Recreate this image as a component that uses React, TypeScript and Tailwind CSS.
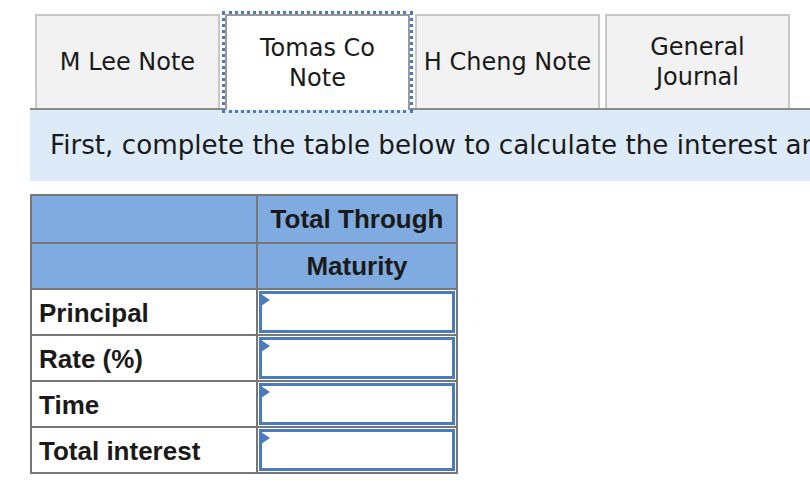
import React from "react";

const tabs = [
  { label: "M Lee Note", active: false },
  { label: "Tomas Co Note", active: true, lines: ["Tomas Co", "Note"] },
  { label: "H Cheng Note", active: false },
  { label: "General Journal", active: false, lines: ["General", "Journal"] },
];

const rows = ["Principal", "Rate (%)", "Time", "Total interest"];

function InputCell() {
  return (
    <td className="border-2 border-[#777] p-0 h-[46px]">
      <div className="relative h-[42px] mx-[1px] border-[3px] border-[#4a7bbd] bg-white">
        <span className="absolute -left-[1px] top-0 w-0 h-0 border-y-[6px] border-y-transparent border-l-[9px] border-l-[#4a7bbd]" />
      </div>
    </td>
  );
}

export default function App() {
  return (
    <div className="w-[810px] h-[494px] overflow-hidden bg-white text-[#1a1a1a] pt-[14px]">
      {/* tab strip */}
      <div className="ml-[30px] flex items-end gap-[5px] pl-[5px] border-b-2 border-[#8a8a8a] font-['DejaVu_Sans',Verdana,sans-serif] text-[24px] leading-[30px]">
        {tabs.map((t) =>
          t.active ? (
            <div
              key={t.label}
              className="relative -mb-[2px] w-[185px] h-[96px] bg-white border-2 border-b-0 border-[#9a9a9a] outline-[3px] outline-dotted outline-[#4a7bbd] flex flex-col items-center justify-center text-center"
            >
              {t.lines!.map((l) => (
                <span key={l}>{l}</span>
              ))}
            </div>
          ) : (
            <div
              key={t.label}
              className="w-[185px] h-[94px] bg-[#f2f2f2] border-2 border-b-0 border-[#c8c8c8] flex flex-col items-center justify-center text-center"
            >
              {t.lines ? t.lines.map((l) => <span key={l}>{l}</span>) : <span>{t.label}</span>}
            </div>
          )
        )}
      </div>

      {/* instructions band */}
      <div className="ml-[30px] h-[71px] bg-[#ddebf8] flex items-center pl-[20px] whitespace-nowrap overflow-hidden font-['DejaVu_Sans',Verdana,sans-serif] text-[26.2px]">
        First, complete the table below to calculate the interest and maturity value of each note.
      </div>

      {/* table */}
      <table className="mt-[13px] ml-[30px] border-collapse font-['Liberation_Sans',Arial,sans-serif] font-bold text-[26px] leading-none">
        <thead>
          <tr className="bg-[#80abe0]">
            <th className="border-2 border-[#777] w-[226px] h-[48px]" />
            <th className="border-2 border-[#777] w-[200px] h-[48px] text-center">Total Through</th>
          </tr>
          <tr className="bg-[#80abe0]">
            <th className="border-2 border-[#777] h-[46px]" />
            <th className="border-2 border-[#777] h-[46px] text-center">Maturity</th>
          </tr>
        </thead>
        <tbody>
          {rows.map((r) => (
            <tr key={r}>
              <td className="border-2 border-[#777] h-[46px] pl-[7px] pt-[2px] text-left">{r}</td>
              <InputCell />
            </tr>
          ))}
        </tbody>
      </table>
    </div>
  );
}
